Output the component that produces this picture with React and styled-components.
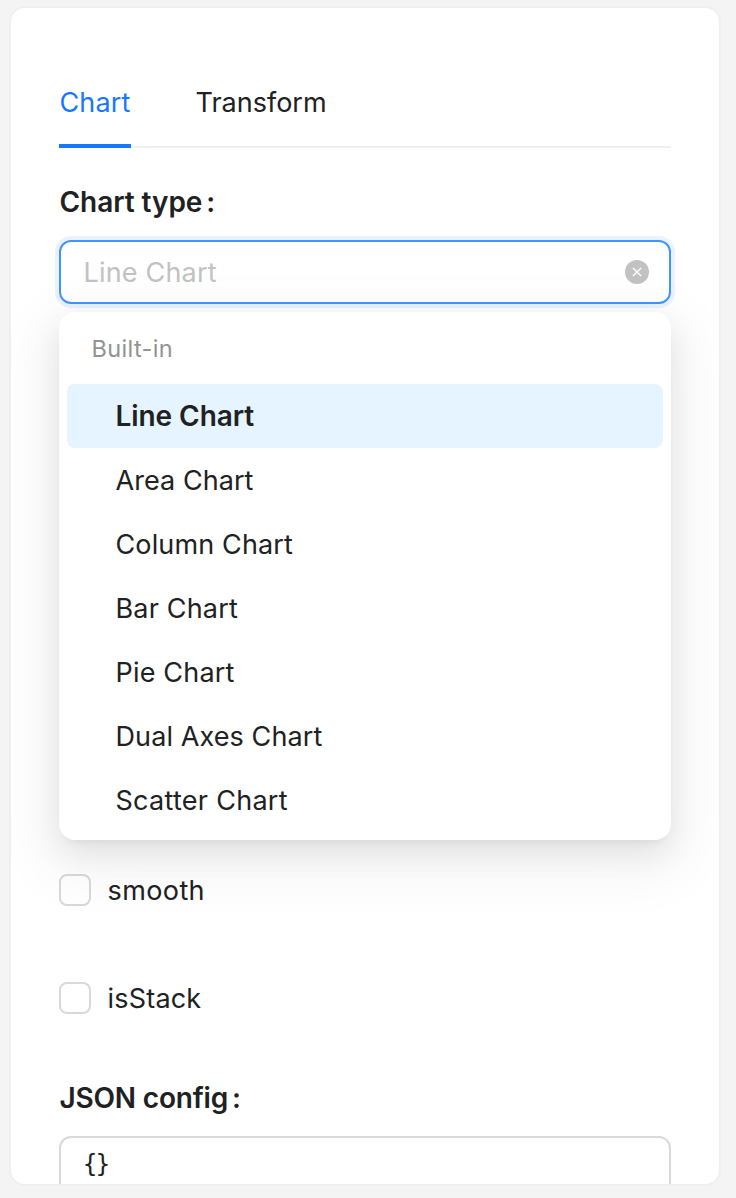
import React from "react";
import styled, { createGlobalStyle } from "styled-components";

const GlobalStyle = createGlobalStyle`
  *, *::before, *::after { box-sizing: border-box; }
  body {
    margin: 0;
    background: #f4f4f4;
    color: #202122;
    font-family: Inter, "Liberation Sans", sans-serif;
    font-size: 27px;
    line-height: 46px;
  }
`;

const Page = styled.main`
  height: 1198px;
  padding: 6px 15px 12px 9px;
  overflow: hidden;
`;

const Card = styled.section`
  height: 1180px;
  padding: 72px 48px 0;
  overflow: hidden;
  background: #fff;
  border: 2px solid #efefef;
  border-radius: 16px;
`;

const Text = styled.span`
  display: block;
  height: 44px;
  padding-left: 0.5px;
  letter-spacing: ${(p) => p.$spacing || 0}px;
  white-space: nowrap;
`;

const Tabs = styled.nav`
  display: flex;
  gap: 64px;
  height: 68px;
  border-bottom: 2px solid #f0f0f0;
`;

const Tab = styled.div`
  height: 68px;
  width: ${(p) => p.$width}px;
  color: ${(p) => (p.$active ? "#1677ff" : "inherit")};
  border-bottom: ${(p) => (p.$active ? "4px solid #1677ff" : "none")};
`;

const Label = styled.div`
  display: flex;
  gap: 4px;
  height: 44px;
  margin-top: ${(p) => p.$top}px;
  font-size: 28px;
  font-weight: 600;
  line-height: 44px;
`;

const Field = styled.div`
  position: relative;
  margin-top: 16px;
`;

const SelectBox = styled.div`
  display: flex;
  align-items: center;
  justify-content: space-between;
  height: 64px;
  padding: 0 20px 0 22px;
  color: #c2c2c2;
  border: 2px solid #4096ff;
  border-radius: 12px;
  box-shadow: 0 0 0 4px rgba(5, 95, 255, 0.08);
`;

const Menu = styled.div`
  position: absolute;
  z-index: 1;
  top: 72px;
  left: 0;
  right: 0;
  padding: 8px;
  background: #fff;
  border-radius: 16px;
  box-shadow:
    0 12px 32px rgba(0, 0, 0, 0.08),
    0 6px 12px -8px rgba(0, 0, 0, 0.12),
    0 18px 56px 16px rgba(0, 0, 0, 0.05);
`;

const Group = styled.div`
  height: 64px;
  padding: 6px 24px;
  color: #929292;
  font-size: 23.5px;
`;

const Option = styled.div`
  height: 64px;
  padding: 10px 48px;
  border-radius: 8px;
  background: ${(p) => (p.$selected ? "#e6f4ff" : "transparent")};
  font-size: ${(p) => (p.$selected ? 28 : 27)}px;
  font-weight: ${(p) => (p.$selected ? 600 : 400)};
  line-height: ${(p) => (p.$selected ? 44 : 46)}px;
`;

const CheckRow = styled.label`
  display: flex;
  align-items: center;
  gap: 16px;
  height: 44px;
  margin-top: ${(p) => p.$top}px;
`;

const Box = styled.span`
  width: 32px;
  height: 32px;
  border: 2px solid #d9d9d9;
  border-radius: 8px;
`;

const Editor = styled.div`
  height: 200px;
  margin-top: 16px;
  padding: 3px 21px;
  border: 2px solid #d9d9d9;
  border-radius: 12px;
  font-family: "DejaVu Sans", sans-serif;
  font-size: 24px;
`;

const ClearIcon = () => (
  <svg width="24" height="24" viewBox="0 0 24 24">
    <circle cx="12" cy="12" r="12" fill="#c2c2c2" />
    <path d="M7.9 7.9l8.2 8.2M16.1 7.9l-8.2 8.2" stroke="#fff" strokeWidth="1.4" />
  </svg>
);

const options = [
  ["Line Chart", -0.06],
  ["Area Chart", 0.06],
  ["Column Chart", 0.13],
  ["Bar Chart", 0.18],
  ["Pie Chart", 0.18],
  ["Dual Axes Chart", 0.1],
  ["Scatter Chart", 0.28],
];

export default function App() {
  return (
    <>
      <GlobalStyle />
      <Page>
        <Card>
          <Tabs>
            <Tab $active $width={72}><Text $spacing={0.15}>Chart</Text></Tab>
            <Tab $width={132}><Text>Transform</Text></Tab>
          </Tabs>
          <Label $top={32}><Text $spacing={-0.06}>Chart type</Text><span>:</span></Label>
          <Field>
            <SelectBox><Text $spacing={0.18}>Line Chart</Text><ClearIcon /></SelectBox>
            <Menu>
              <Group><Text $spacing={0.35}>Built-in</Text></Group>
              {options.map(([name, spacing], i) => (
                <Option key={name} $selected={i === 0}>
                  <Text $spacing={spacing}>{name}</Text>
                </Option>
              ))}
            </Menu>
          </Field>
          <CheckRow $top={564}><Box /><Text $spacing={0.4}>smooth</Text></CheckRow>
          <CheckRow $top={64}><Box /><Text $spacing={0.2}>isStack</Text></CheckRow>
          <Label $top={56}><Text $spacing={-0.2}>JSON config</Text><span>:</span></Label>
          <Editor><Text $spacing={-2.5}>{"{}"}</Text></Editor>
        </Card>
      </Page>
    </>
  );
}
